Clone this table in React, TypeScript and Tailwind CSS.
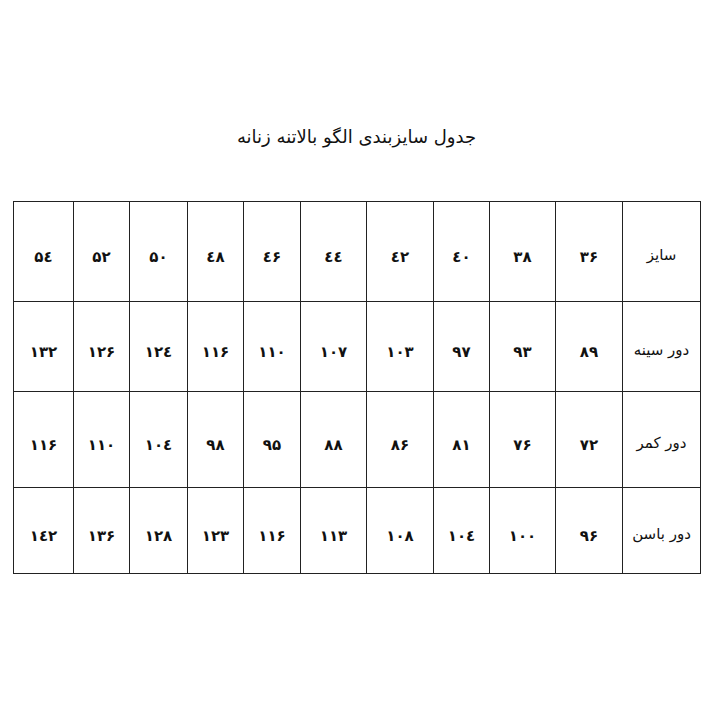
const widths = ['w-[78px]', 'w-[67px]', 'w-[66px]', 'w-[56px]', 'w-[67px]', 'w-[66px]', 'w-[57px]', 'w-[56px]', 'w-[58px]', 'w-[56px]', 'w-[60px]'];

const rows = [
  { label: 'سایز', h: 'h-[100px]', values: ['۳۶', '۳۸', '٤۰', '٤۲', '٤٤', '٤۶', '٤۸', '۵۰', '۵۲', '۵٤'] },
  { label: 'دور سینه', h: 'h-[90px]', values: ['۸۹', '۹۳', '۹۷', '۱۰۳', '۱۰۷', '۱۱۰', '۱۱۶', '۱۲٤', '۱۲۶', '۱۳۲'] },
  { label: 'دور کمر', h: 'h-[96px]', values: ['۷۲', '۷۶', '۸۱', '۸۶', '۸۸', '۹۵', '۹۸', '۱۰٤', '۱۱۰', '۱۱۶'] },
  { label: 'دور باسن', h: 'h-[86px]', values: ['۹۶', '۱۰۰', '۱۰٤', '۱۰۸', '۱۱۳', '۱۱۶', '۱۲۳', '۱۲۸', '۱۳۶', '۱٤۲'] },
];

export default function App() {
  return (
    <div className="w-[716px] h-[716px] bg-white font-['DejaVu_Sans',sans-serif] text-[#111]">
      <div className="pt-[123px] pl-[13px]">
        <h1 dir="rtl" className="w-[687px] text-center text-[18px] leading-[28px]">
          جدول سایزبندی الگو بالاتنه زنانه
        </h1>
        <table dir="rtl" className="mt-[50px] w-[688px] border-collapse table-fixed">
          <tbody>
            {rows.map((r) => (
              <tr key={r.label} className={r.h}>
                <td className={`${widths[0]} border border-[#222] pt-[8px] text-center text-[15px]`}>{r.label}</td>
                {r.values.map((v, i) => (
                  <td key={i} className={`${widths[i + 1]} border border-[#222] pt-[12px] text-center text-[15px] font-bold`}>
                    {v}
                  </td>
                ))}
              </tr>
            ))}
          </tbody>
        </table>
      </div>
    </div>
  );
}
